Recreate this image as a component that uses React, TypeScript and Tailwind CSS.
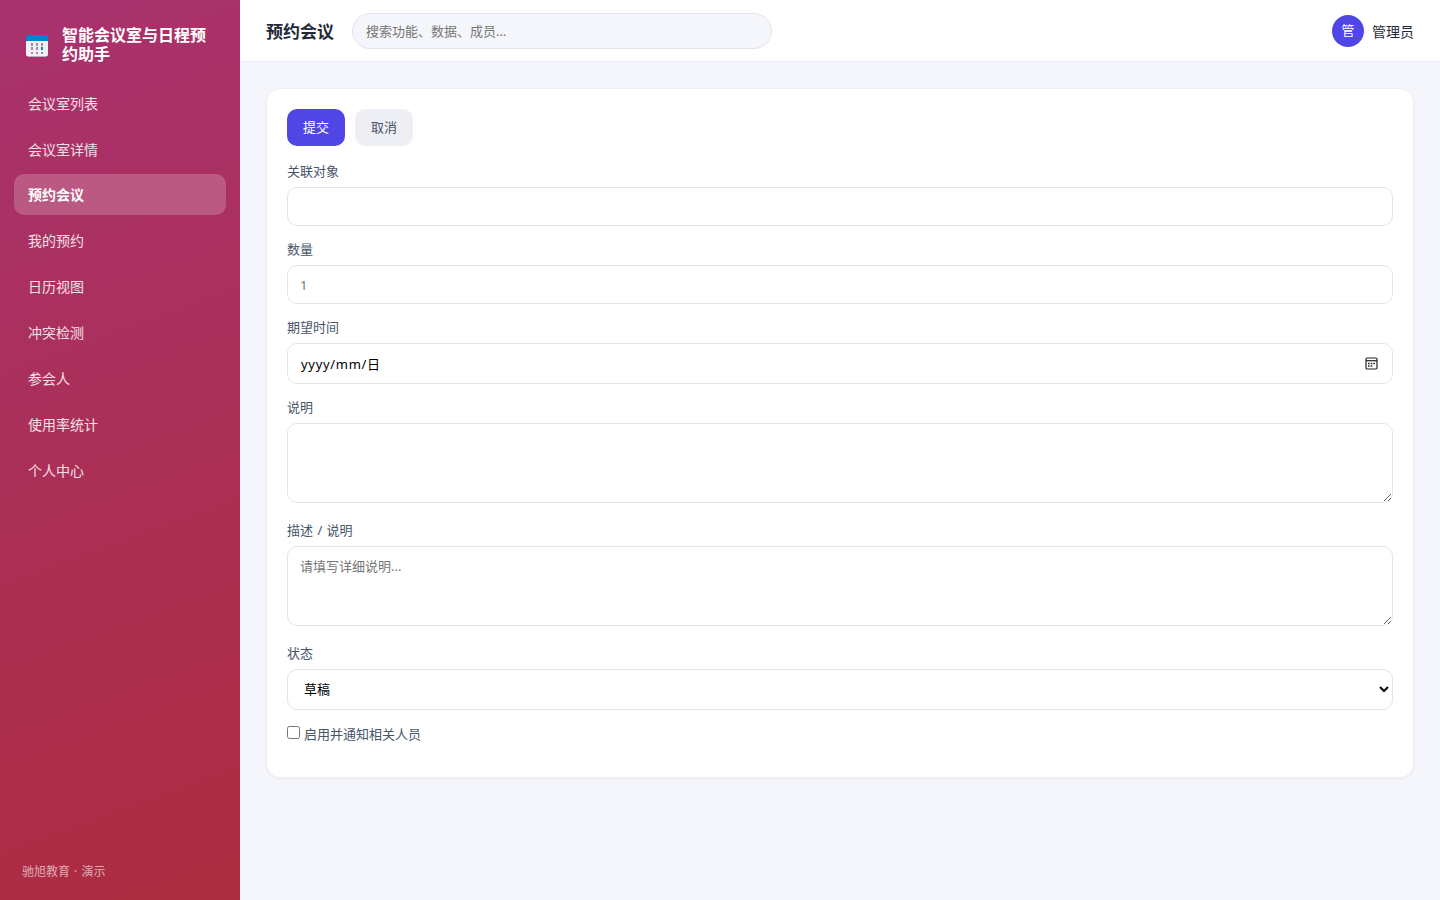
import React, { useState } from 'react';

const NAV_ITEMS = [
  '会议室列表',
  '会议室详情',
  '预约会议',
  '我的预约',
  '日历视图',
  '冲突检测',
  '参会人',
  '使用率统计',
  '个人中心',
];

const fieldClass =
  'block w-full rounded-[10px] border border-[#e3e4ec] bg-white px-3 text-[13px] text-black placeholder:text-[#757575] outline-none focus:border-[#4f46e5]';

const CalendarLogo: React.FC = () => (
  <svg width="22" height="22" viewBox="0 0 22 22" className="shrink-0 mt-px">
    <path d="M0 5h22v14a2.5 2.5 0 0 1-2.5 2.5h-17A2.5 2.5 0 0 1 0 19z" fill="#f4eef8" />
    <path d="M1.5 21h19l-1 1h-17z" fill="#b9b0c2" />
    <path d="M0 6V3A3 3 0 0 1 3 0h16a3 3 0 0 1 3 3v3z" fill="#0283d2" />
    {[8, 12, 17].map((y) =>
      [5, 10, 15].map((x) => (
        <rect key={`${x}-${y}`} x={x} y={y} width="2" height={y === 17 ? 2 : 3} fill={x === 15 && y === 12 ? '#0283d2' : '#998ea3'} />
      )),
    )}
  </svg>
);

const DateIcon: React.FC = () => (
  <svg width="13" height="13" viewBox="0 0 13 13" fill="none">
    <rect x="1" y="1" width="11" height="11" rx="1.2" stroke="#222" strokeWidth="1.2" />
    <path d="M1 3.7h11" stroke="#222" strokeWidth="1.2" />
    <path d="M3 6.5h1.6M5.7 6.5h1.6M8.4 6.5H10M3 9h1.6M5.7 9h1.6" stroke="#222" strokeWidth="1.3" />
  </svg>
);

const Field: React.FC<{ label: string; children: React.ReactNode }> = ({ label, children }) => (
  <div className="mb-3.5">
    <label className="block h-[19px] leading-[19px] mb-1.5 [word-spacing:1px]">{label}</label>
    {children}
  </div>
);

const Sidebar: React.FC<{ active: string; onSelect: (name: string) => void }> = ({ active, onSelect }) => (
  <aside className="w-60 shrink-0 flex flex-col px-3.5 pt-[26px] pb-[18px] text-white bg-[linear-gradient(160deg,#a8326e,#ad2c40)]">
    <div className="flex items-center gap-3.5 pl-3 pr-2">
      <CalendarLogo />
      <h1 className="text-base leading-[19px] font-bold">智能会议室与日程预约助手</h1>
    </div>
    <nav className="flex flex-col gap-[5px] mt-[18px]">
      {NAV_ITEMS.map((name) => (
        <button
          key={name}
          onClick={() => onSelect(name)}
          className={`h-[41px] px-3.5 nth-[-n+2]:pt-0.5 rounded-[10px] text-left text-sm ${name === active ? 'bg-white/20 font-bold' : 'text-white/85'}`}
        >
          {name}
        </button>
      ))}
    </nav>
    <div className="mt-auto pl-2 text-xs leading-5 text-white/60 [word-spacing:1px]">驰旭教育 · 演示</div>
  </aside>
);

const App: React.FC = () => {
  const [page, setPage] = useState('预约会议');

  return (
    <div className="h-screen flex overflow-hidden bg-[#f5f6fb] text-[#1f2937] font-['Noto_Sans','Noto_Sans_CJK_SC',sans-serif]">
      <Sidebar active={page} onSelect={setPage} />

      <div className="flex-1 flex flex-col">
        <header className="h-[62px] flex items-center px-[26px] bg-white border-b border-[#ebecf1]">
          <h2 className="text-[17px] font-bold mr-[18px] pt-0.5">{page}</h2>
          <input
            className="w-[420px] h-9 px-[13px] rounded-full border border-[#e3e4ec] bg-[#f5f6fb] text-[13px] placeholder:text-[#757575] outline-none"
            placeholder="搜索功能、数据、成员…"
          />
          <div className="ml-auto flex items-center gap-2 text-sm">
            <span className="w-8 h-8 rounded-full bg-[#4f46e5] text-white flex items-center justify-center text-[13px]">管</span>
            <span className="pt-0.5">管理员</span>
          </div>
        </header>

        <main className="p-[26px]">
          <form
            className="rounded-[14px] border border-[#eef0f4] bg-white p-5 text-[13px] text-[#475569] shadow-[0_1px_3px_rgba(30,41,59,0.05)]"
            onSubmit={(e) => e.preventDefault()}
          >
            <div className="flex gap-2.5 mb-4">
              <button type="submit" className="w-[58px] h-[37px] pt-px rounded-[10px] bg-[#4f46e5] text-white">提交</button>
              <button type="button" className="w-[58px] h-[37px] pt-px rounded-[10px] bg-[#eeeff4]">取消</button>
            </div>

            <Field label="关联对象">
              <input className={`${fieldClass} h-[39px]`} />
            </Field>
            <Field label="数量">
              <input className={`${fieldClass} h-[39px]`} placeholder="1" />
            </Field>
            <Field label="期望时间">
              <div className={`${fieldClass} h-[41px]`}>
                <div className="h-full flex items-center justify-between pl-px pr-0.5">
                  <span className="pt-0.5 tracking-[0.7px]">yyyy/mm/日</span>
                  <DateIcon />
                </div>
              </div>
            </Field>
            <Field label="说明">
              <textarea className={`${fieldClass} h-20 py-2.5 mb-[18px] leading-[18px] resize`} />
            </Field>
            <Field label="描述 / 说明">
              <textarea className={`${fieldClass} h-20 py-2.5 mb-[18px] leading-[18px] resize`} placeholder="请填写详细说明..." />
            </Field>
            <Field label="状态">
              <select className={`${fieldClass} h-[41px] pr-0 pb-px`} defaultValue="草稿">
                <option>草稿</option>
                <option>已提交</option>
              </select>
            </Field>
            <label className="flex items-center gap-1 h-[19px] mb-3.5">
              <input type="checkbox" className="w-[13px] h-[13px] mb-[3px]" />
              <span className="pt-0.5">启用并通知相关人员</span>
            </label>
          </form>
        </main>
      </div>
    </div>
  );
};

export default App;
